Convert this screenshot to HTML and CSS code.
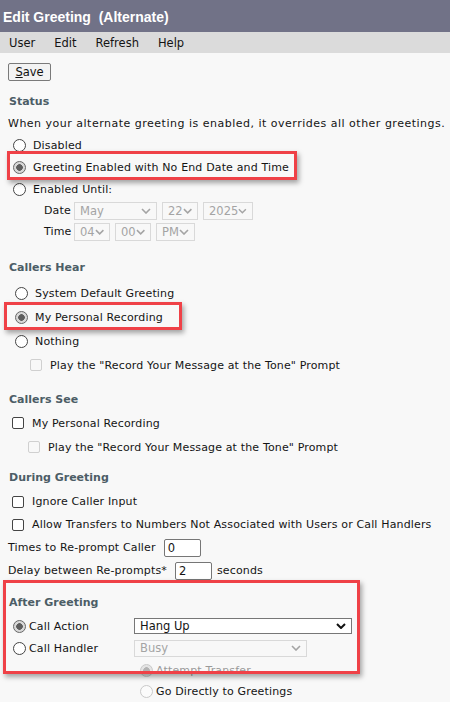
FILE: index.html
```html
<!DOCTYPE html>
<html lang="en">
<head>
<meta charset="UTF-8">
<meta name="viewport" content="width=device-width, initial-scale=1.0">
<title>Edit Greeting (Alternate)</title>
<link rel="stylesheet" href="styles.css">
</head>
<body>
    <div class="titlebar">Edit Greeting&nbsp; (Alternate)</div>
    <nav class="menubar">
        <span>User</span>
        <span>Edit</span>
        <span>Refresh</span>
        <span>Help</span>
    </nav>

    <main class="content">
        <div class="toolbar">
            <button class="btn"><u>S</u>ave</button>
        </div>

        <section class="group status">
            <h2>Status</h2>
            <p class="desc">When your alternate greeting is enabled, it overrides all other greetings.</p>
            <div class="opt"><span class="radio"></span>Disabled</div>
            <div class="opt mark mark-status"><span class="radio on"></span>Greeting Enabled with No End Date and Time</div>
            <div class="opt"><span class="radio"></span>Enabled Until:</div>
            <div class="when">
                <div class="when-row">
                    <span class="when-label">Date</span>
                    <span class="select off w-month">May<svg viewBox="0 0 10 6"><path d="M1 1l4 4 4-4"/></svg></span>
                    <span class="select off w-day">22<svg viewBox="0 0 10 6"><path d="M1 1l4 4 4-4"/></svg></span>
                    <span class="select off w-year">2025<svg viewBox="0 0 10 6"><path d="M1 1l4 4 4-4"/></svg></span>
                </div>
                <div class="when-row">
                    <span class="when-label">Time</span>
                    <span class="select off w-day">04<svg viewBox="0 0 10 6"><path d="M1 1l4 4 4-4"/></svg></span>
                    <span class="select off w-day">00<svg viewBox="0 0 10 6"><path d="M1 1l4 4 4-4"/></svg></span>
                    <span class="select off w-ampm">PM<svg viewBox="0 0 10 6"><path d="M1 1l4 4 4-4"/></svg></span>
                </div>
            </div>
        </section>

        <section class="group hear">
            <h2>Callers Hear</h2>
            <div class="opt"><span class="radio"></span>System Default Greeting</div>
            <div class="opt mark mark-hear"><span class="radio on"></span>My Personal Recording</div>
            <div class="opt"><span class="radio"></span>Nothing</div>
            <div class="opt sub"><span class="check off"></span>Play the "Record Your Message at the Tone" Prompt</div>
        </section>

        <section class="group see">
            <h2>Callers See</h2>
            <div class="opt"><span class="check"></span>My Personal Recording</div>
            <div class="opt sub"><span class="check off"></span>Play the "Record Your Message at the Tone" Prompt</div>
        </section>

        <section class="group during">
            <h2>During Greeting</h2>
            <div class="opt"><span class="check"></span>Ignore Caller Input</div>
            <div class="opt"><span class="check"></span>Allow Transfers to Numbers Not Associated with Users or Call Handlers</div>
            <div class="field">Times to Re-prompt Caller <span class="textbox">0</span></div>
            <div class="field">Delay between Re-prompts* <span class="textbox">2</span> seconds</div>
        </section>

        <section class="group after">
            <h2>After Greeting</h2>
            <div class="action-row">
                <div class="opt"><span class="radio on"></span>Call Action</div>
                <span class="select w-action">Hang Up<svg viewBox="0 0 10 6"><path d="M1 1l4 4 4-4"/></svg></span>
            </div>
            <div class="action-row">
                <div class="opt"><span class="radio"></span>Call Handler</div>
                <span class="select off w-handler">Busy<svg viewBox="0 0 10 6"><path d="M1 1l4 4 4-4"/></svg></span>
            </div>
            <div class="transfer">
                <div class="opt off"><span class="radio on off"></span>Attempt Transfer</div>
                <div class="opt"><span class="radio off"></span>Go Directly to Greetings</div>
            </div>
            <div class="mark-box"></div>
        </section>
    </main>
</body>
</html>
```

FILE: styles.css
```css
body {
    margin: 0;
    background: #f8f8f8;
    font-family: "DejaVu Sans", sans-serif;
    font-size: 11px;
    letter-spacing: 0.15px;
    color: #141414;
    overflow: hidden;
}

.titlebar {
    height: 32px;
    line-height: 35px;
    background: #717287;
    color: #fff;
    font-family: "Liberation Sans", Arial, sans-serif;
    font-weight: bold;
    font-size: 14px;
    letter-spacing: 0;
    padding-left: 3px;
}

.menubar {
    height: 21px;
    background: #dbdbdb;
    display: flex;
    align-items: center;
    gap: 19px;
    padding-left: 9px;
    font-size: 11.5px;
    letter-spacing: 0;
}

.content {
    padding: 0 8px;
}

.toolbar {
    padding-top: 10px;
}

.btn {
    font: inherit;
    font-size: 11.5px;
    color: #111;
    height: 18px;
    width: 43px;
    padding: 0;
    background: #f3f3f3;
    border: 1px solid #7a7a7a;
    border-radius: 2px;
    display: block;
}

h2 {
    margin: 0;
    height: 22px;
    line-height: 22px;
    font-size: 11px;
    letter-spacing: 0;
    color: #4c5d66;
    padding-left: 1px;
}

.desc {
    margin: 0;
    height: 21px;
    line-height: 21px;
    letter-spacing: 0.5px;
    white-space: nowrap;
}

.opt {
    display: flex;
    align-items: center;
    height: 22px;
    white-space: nowrap;
}

.radio {
    width: 11px;
    height: 11px;
    border: 1px solid #444;
    border-radius: 50%;
    background: #fff;
    flex: none;
    margin-right: 7px;
}

.radio.on {
    border-color: #666;
    background: radial-gradient(circle, #5e5e5e 0 3px, #d8d8d8 3.6px);
}

.radio.off {
    border-color: #c9c9c9;
    background: #fbfbfb;
}

.radio.on.off {
    background: radial-gradient(circle, #b3b3b3 0 3px, #e4e4e4 3.6px);
}

.check {
    width: 10px;
    height: 10px;
    border: 1px solid #444;
    border-radius: 2px;
    background: #fff;
    flex: none;
    margin-right: 8px;
}

.check.off {
    border-color: #d0d0d0;
    background: #f8f8f8;
}

.mark {
    position: relative;
}

.mark::after {
    content: "";
    position: absolute;
    border: 3px solid #ef4147;
    box-shadow: 2px 3px 5px rgba(0, 0, 0, 0.35);
}

/* status */
.status {
    margin-top: 10px;
}

.status .opt {
    padding-left: 5px;
}

.mark-status::after {
    left: -1px;
    width: 284px;
    top: -5px;
    bottom: -2px;
}

.when {
    padding-left: 36px;
}

.when-row {
    display: flex;
    align-items: center;
    gap: 5px;
    height: 21px;
}

.when-label {
    width: 25px;
}

.select {
    display: flex;
    align-items: center;
    justify-content: space-between;
    box-sizing: border-box;
    height: 18px;
    padding: 0 5px 0 5px;
    border: 1px solid #777;
    background: #fff;
    font-size: 11.5px;
    letter-spacing: 0;
}

.select svg {
    width: 10px;
    height: 6px;
    fill: none;
    stroke: #111;
    stroke-width: 2;
}

.select.off {
    border-color: #d9d9d9;
    background: #f8f8f8;
    color: #a4a4a4;
}

.select.off svg {
    stroke: #a4a4a4;
    stroke-width: 1.6;
}

.w-month { width: 83px; }
.w-day { width: 36px; }
.w-year { width: 50px; }
.w-ampm { width: 39px; }

/* callers hear */
.hear {
    margin-top: 15px;
}

.hear .opt {
    height: 24px;
    padding-left: 7px;
}

.hear h2 {
    margin-bottom: 2px;
}

.hear .opt.sub {
    padding-left: 22px;
}

.mark-hear::after {
    left: -4px;
    width: 172px;
    top: -3px;
    bottom: -1px;
}

/* callers see */
.see {
    margin-top: 12px;
}

.see .opt,
.during .opt {
    height: 24px;
    padding-left: 4px;
}

.see .opt.sub {
    padding-left: 20px;
}

/* during greeting */
.during {
    margin-top: 8px;
}

.during h2 {
    margin-bottom: 1px;
}

.during .opt {
    height: 23px;
}

.field {
    display: flex;
    align-items: center;
    height: 23px;
}

.textbox {
    box-sizing: border-box;
    width: 37px;
    height: 18px;
    line-height: 16px;
    border: 1px solid #767676;
    border-radius: 2px;
    background: #fff;
    padding-left: 3px;
    font-size: 11.5px;
    margin: 0 5px 0 8px;
}

/* after greeting */
.after {
    position: relative;
    margin-top: 10px;
}

.after h2 {
    margin-bottom: 1px;
}

.after .opt {
    padding-left: 5px;
}

.after .opt .radio {
    margin-right: 3px;
}

.action-row {
    display: flex;
    align-items: center;
    height: 22px;
}

.action-row .opt {
    width: 121px;
}

.w-action {
    width: 218px;
    height: 16px;
}

.w-handler {
    width: 173px;
    height: 17px;
}

.transfer {
    padding-left: 127px;
    padding-top: 1px;
}

.transfer .opt {
    height: 21px;
}

.transfer .radio {
    margin-right: 3px;
}

.opt.off {
    color: #9a9a9a;
}

.mark-box {
    position: absolute;
    left: -5px;
    top: -12px;
    width: 351px;
    height: 88px;
    border: 3px solid #ef4147;
    box-shadow: 2px 3px 5px rgba(0, 0, 0, 0.35);
}
```
